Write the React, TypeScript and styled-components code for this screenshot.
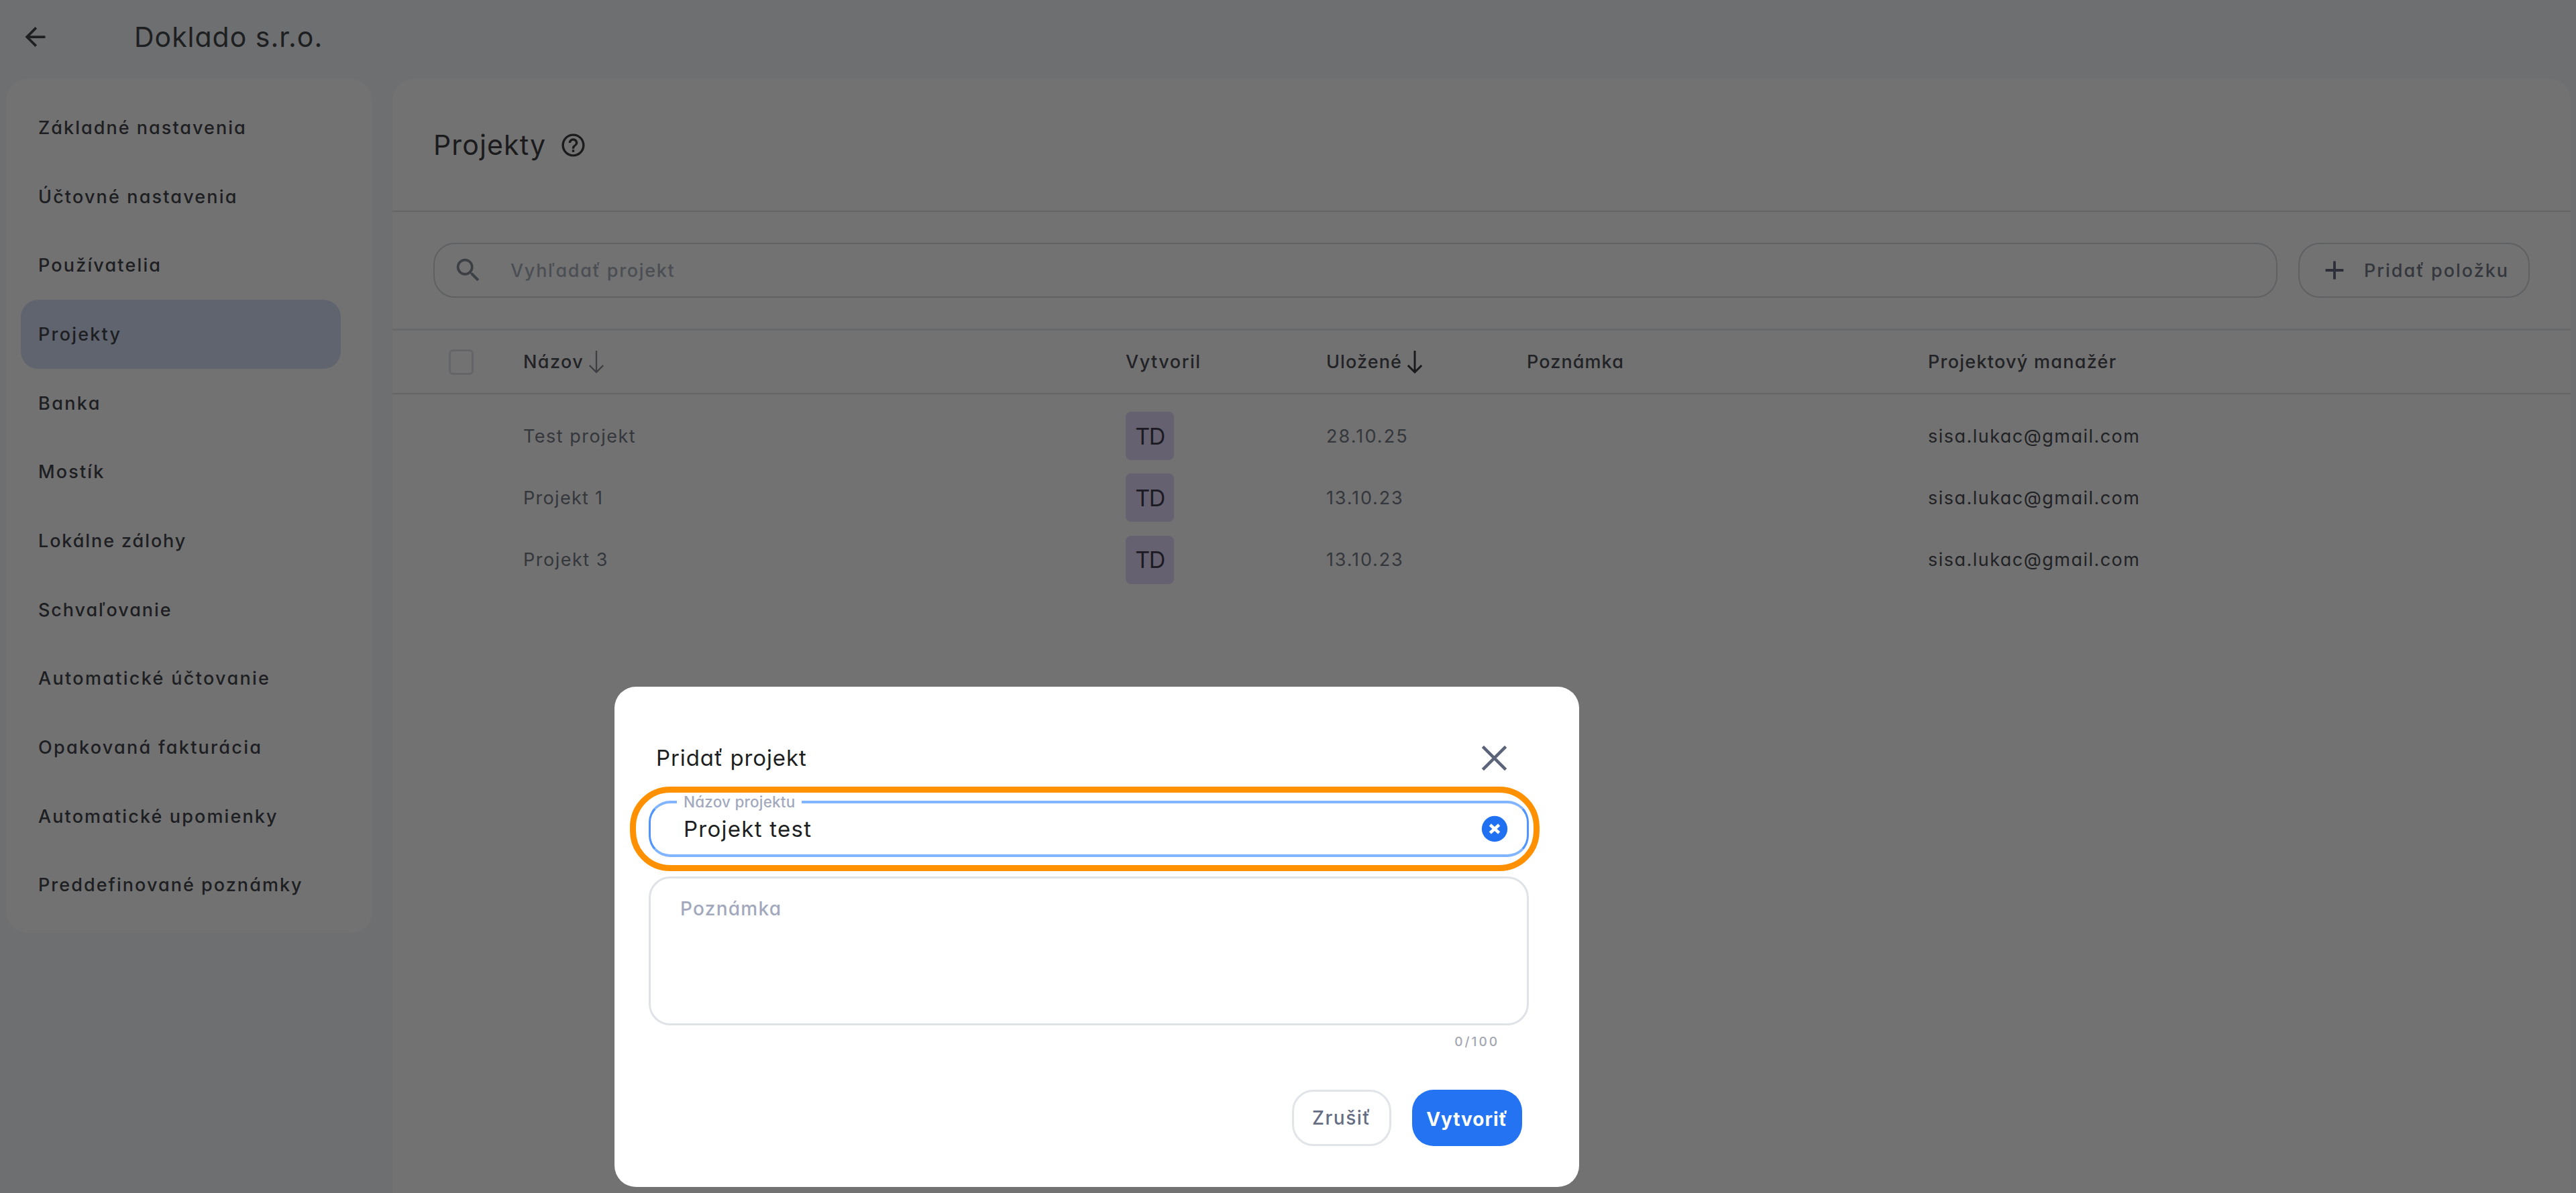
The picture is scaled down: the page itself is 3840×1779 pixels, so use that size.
import React from "react";
import styled, { createGlobalStyle } from "styled-components";

const GlobalStyle = createGlobalStyle`
  *, *::before, *::after { box-sizing: border-box; }
  body {
    margin: 0;
    background: #f6f9fd;
    font-family: Inter, "Liberation Sans", sans-serif;
    font-feature-settings: "cv11";
    overflow: hidden;
  }
`;

const Page = styled.div`
  display: flex;
  flex-direction: column;
  width: 3840px;
  height: 1779px;
`;

const Label = styled.span<{ $ls?: number }>`
  letter-spacing: ${(p) => p.$ls ?? 0}px;
  white-space: nowrap;
`;

const TopBar = styled.header`
  display: flex;
  align-items: center;
  height: 118px;
  padding: 0 0 9px 30px;
  color: #45464b;
  font-size: 41px;
`;

const BackIcon = styled.svg`
  width: 45px;
  height: 46px;
  margin-right: 125px;
`;

const Body = styled.div`
  display: flex;
  align-items: flex-start;
  flex: 1;
  padding: 0 8px 0 9px;
  gap: 30px;
`;

const Sidebar = styled.nav`
  width: 546px;
  height: 1273px;
  padding: 21px 47px 0 22px;
  border-radius: 32px;
  background: #fff;
`;

const NavItem = styled.div<{ $active?: boolean }>`
  display: flex;
  align-items: center;
  height: 102.7px;
  padding: 0 0 0 26px;
  border-radius: 26px;
  background: ${(p) => (p.$active ? "#d4e0f8" : "transparent")};
  color: #45464c;
  font-size: 27px;
  font-weight: 450;
`;

const Panel = styled.main`
  flex: 1;
  align-self: stretch;
  border-radius: 32px 32px 0 0;
  background: #fff;
`;

const PanelHeader = styled.div`
  display: flex;
  align-items: center;
  gap: 20px;
  height: 198px;
  padding-left: 61px;
  border-bottom: 2px solid #dfe2e6;
  color: #3d3e42;
  font-size: 41px;
`;

const HelpIcon = styled.svg`
  width: 41px;
  height: 41px;
`;

const Toolbar = styled.div`
  display: flex;
  align-items: center;
  gap: 31px;
  height: 177px;
  padding: 0 61px;
  border-bottom: 3px solid #e9ebee;
`;

const SearchBox = styled.div`
  display: flex;
  align-items: center;
  flex: 1;
  height: 82px;
  padding-left: 27px;
  gap: 40px;
  border: 2px solid #d2d6dc;
  border-radius: 32px;
  color: #a9b0bc;
  font-size: 27px;
  font-weight: 500;
`;

const SearchIcon = styled.svg`
  width: 46px;
  height: 46px;
  color: #878d98;
`;

const AddButton = styled.div`
  display: flex;
  align-items: center;
  width: 345px;
  height: 82px;
  padding-left: 29px;
  gap: 21px;
  border: 2px solid #d2d6dc;
  border-radius: 32px;
  color: #757b88;
  font-size: 27px;
  font-weight: 500;
`;

const PlusIcon = styled.svg`
  width: 46px;
  height: 46px;
  color: #656c80;
`;

const Row = styled.div<{ $head?: boolean }>`
  display: grid;
  grid-template-columns: 195px 898px 299px 299px 598px 1fr;
  align-items: center;
  height: ${(p) => (p.$head ? 95 : 92.3)}px;
  border-bottom: ${(p) => (p.$head ? "2px solid #dfe2e6" : "none")};
  font-size: 27px;
  font-weight: ${(p) => (p.$head ? 450 : 400)};
`;

const Rows = styled.div`
  padding-top: 16px;
`;

const Cell = styled.div<{ $tone?: "head" | "muted" | "text" }>`
  display: flex;
  align-items: center;
  gap: 7px;
  color: ${(p) => (p.$tone === "head" ? "#4d4e55" : p.$tone === "muted" ? "#757b87" : "#4b4d54")};
`;

const Checkbox = styled.span`
  width: 37px;
  height: 38px;
  margin-left: 84px;
  border: 3px solid #dfe2e8;
  border-radius: 6px;
`;

const SortIcon = styled.svg<{ $active?: boolean }>`
  width: 24px;
  height: 35px;
  color: ${(p) => (p.$active ? "#3a3b40" : "#8a8d94")};
`;

const Avatar = styled.span`
  display: flex;
  align-items: center;
  justify-content: center;
  width: 72px;
  height: 72px;
  border-radius: 8px;
  background: #e1d8fa;
  color: #3f3e4e;
  font-size: 34px;
  letter-spacing: -1.6px;
`;

const Overlay = styled.div`
  position: absolute;
  inset: 0;
  padding: 1024px 0 0 916px;
  background: rgba(0, 0, 0, 0.553);
`;

const Dialog = styled.section`
  display: flex;
  flex-direction: column;
  width: 1438px;
  height: 746px;
  padding: 65px 75px 61px 51px;
  border-radius: 32px;
  background: #fff;
`;

const DialogHead = styled.div`
  display: flex;
  align-items: center;
  justify-content: space-between;
  height: 82px;
  padding: 0 23px 0 11px;
  color: #1e1f22;
  font-size: 33px;
`;

const CloseIcon = styled.svg`
  width: 57px;
  height: 57px;
  color: #5a6378;
`;

const Field = styled.div`
  position: relative;
  display: flex;
  align-items: center;
  justify-content: space-between;
  height: 84px;
  margin-top: 23px;
  padding: 0 25px 1px 49px;
  border: 3px solid #4f94ff;
  border-top: 4px solid #82b5ff;
  border-bottom: 4px solid #82b5ff;
  border-radius: 32px;
  color: #1e1f22;
  font-size: 33px;
`;

const FieldLabel = styled.span`
  position: absolute;
  top: -17px;
  left: 39px;
  width: 186px;
  padding-left: 10px;
  background: #fff;
  color: #a3a9bd;
  font-size: 22.5px;
  font-weight: 500;
  line-height: 30px;
`;

const Highlight = styled.span`
  position: absolute;
  inset: -25px -19px -25px -31px;
  border: 9px solid #ff9100;
  border-radius: 60px;
`;

const ClearIcon = styled.svg`
  width: 46px;
  height: 46px;
`;

const TextArea = styled.div`
  height: 222px;
  margin-top: 29px;
  padding: 25px 44px;
  border: 3px solid #dfe2e6;
  border-radius: 32px;
  color: #a3a9bd;
  font-size: 28px;
  font-weight: 500;
  line-height: 40px;
`;

const Counter = styled.div`
  display: flex;
  justify-content: flex-end;
  margin-top: 10px;
  padding-right: 44px;
  color: #a3a5b0;
  font-size: 19px;
  font-weight: 500;
  line-height: 30px;
`;

const Actions = styled.div`
  display: flex;
  justify-content: flex-end;
  gap: 31px;
  margin-top: auto;
  padding-right: 10px;
`;

const Button = styled.div<{ $primary?: boolean }>`
  display: flex;
  align-items: center;
  justify-content: center;
  width: ${(p) => (p.$primary ? 164 : 148)}px;
  height: 84px;
  padding-top: ${(p) => (p.$primary ? 3 : 0)}px;
  border: ${(p) => (p.$primary ? "none" : "3px solid #e1e4e8")};
  border-radius: 32px;
  background: ${(p) => (p.$primary ? "#2373f3" : "#fff")};
  color: ${(p) => (p.$primary ? "#fff" : "#666c82")};
  font-size: 28px;
  font-weight: ${(p) => (p.$primary ? 700 : 500)};
`;

const nav = [
  { text: "Základné nastavenia", ls: 2.03 },
  { text: "Účtovné nastavenia", ls: 2.15 },
  { text: "Používatelia", ls: 2.15 },
  { text: "Projekty", ls: 2.2, active: true },
  { text: "Banka", ls: 2.4 },
  { text: "Mostík", ls: 2.15 },
  { text: "Lokálne zálohy", ls: 1.9 },
  { text: "Schvaľovanie", ls: 1.9 },
  { text: "Automatické účtovanie", ls: 2.32 },
  { text: "Opakovaná fakturácia", ls: 2.28 },
  { text: "Automatické upomienky", ls: 2.12 },
  { text: "Preddefinované poznámky", ls: 2.04 },
];

const projects = [
  { name: "Test projekt", date: "28.10.25", ls: 1.5, dateLs: 2.1 },
  { name: "Projekt 1", date: "13.10.23", ls: 1.3, dateLs: 1.85 },
  { name: "Projekt 3", date: "13.10.23", ls: 1.5, dateLs: 1.85 },
];

const Sort = ({ active }: { active?: boolean }) => (
  <SortIcon $active={active} viewBox="0 0 24 36" fill="none" stroke="currentColor" strokeWidth={active ? 3 : 2.4}>
    <path d="M12 1V34M1.5 23.5L12 34L22.5 23.5" />
  </SortIcon>
);

export default function App() {
  return (
    <>
      <GlobalStyle />
      <Page>
        <TopBar>
          <BackIcon viewBox="0 0 24 24" fill="currentColor">
            <path d="M20 11H7.83l5.59-5.59L12 4l-8 8 8 8 1.41-1.41L7.83 13H20v-2z" />
          </BackIcon>
          <Label $ls={0.98}>Doklado s.r.o.</Label>
        </TopBar>
        <Body>
          <Sidebar>
            {nav.map((n) => (
              <NavItem key={n.text} $active={n.active}>
                <Label $ls={n.ls}>{n.text}</Label>
              </NavItem>
            ))}
          </Sidebar>
          <Panel>
            <PanelHeader>
              <Label $ls={1.13}>Projekty</Label>
              <HelpIcon viewBox="0 0 24 24" fill="currentColor">
                <path d="M11 18h2v-2h-2v2zm1-16C6.48 2 2 6.48 2 12s4.48 10 10 10 10-4.48 10-10S17.52 2 12 2zm0 18c-4.41 0-8-3.59-8-8s3.59-8 8-8 8 3.59 8 8-3.59 8-8 8zm0-14c-2.21 0-4 1.79-4 4h2c0-1.1.9-2 2-2s2 .9 2 2c0 2-3 1.75-3 5h2c0-2.25 3-2.5 3-5 0-2.21-1.79-4-4-4z" />
              </HelpIcon>
            </PanelHeader>
            <Toolbar>
              <SearchBox>
                <SearchIcon viewBox="0 0 24 24" fill="currentColor">
                  <path d="M15.5 14h-.79l-.28-.27C15.41 12.59 16 11.11 16 9.5 16 5.91 13.09 3 9.5 3S3 5.91 3 9.5 5.91 16 9.5 16c1.61 0 3.09-.59 4.23-1.57l.27.28v.79l5 4.99L20.49 19l-4.99-5zm-6 0C7.01 14 5 11.99 5 9.5S7.01 5 9.5 5 14 7.01 14 9.5 11.99 14 9.5 14z" />
                </SearchIcon>
                <Label $ls={1.68}>Vyhľadať projekt</Label>
              </SearchBox>
              <AddButton>
                <PlusIcon viewBox="0 0 24 24" fill="currentColor">
                  <path d="M19 13h-6v6h-2v-6H5v-2h6V5h2v6h6v2z" />
                </PlusIcon>
                <Label $ls={1.98}>Pridať položku</Label>
              </AddButton>
            </Toolbar>
            <Row $head>
              <Checkbox />
              <Cell $tone="head"><Label $ls={1.4}>Názov</Label><Sort /></Cell>
              <Cell $tone="head"><Label $ls={1.5}>Vytvoril</Label></Cell>
              <Cell $tone="head"><Label $ls={1.1}>Uložené</Label><Sort active /></Cell>
              <Cell $tone="head"><Label $ls={1.1}>Poznámka</Label></Cell>
              <Cell $tone="head"><Label $ls={1.25}>Projektový manažér</Label></Cell>
            </Row>
            <Rows>
              {projects.map((p) => (
                <Row key={p.name}>
                  <Cell />
                  <Cell $tone="muted"><Label $ls={p.ls}>{p.name}</Label></Cell>
                  <Cell><Avatar>TD</Avatar></Cell>
                  <Cell $tone="muted"><Label $ls={p.dateLs}>{p.date}</Label></Cell>
                  <Cell />
                  <Cell $tone="text"><Label $ls={1.47}>sisa.lukac@gmail.com</Label></Cell>
                </Row>
              ))}
            </Rows>
          </Panel>
        </Body>
      </Page>
      <Overlay>
        <Dialog>
          <DialogHead>
            <Label $ls={0.9}>Pridať projekt</Label>
            <CloseIcon viewBox="0 0 24 24" fill="none" stroke="currentColor" strokeWidth="1.9">
              <path d="M4.8 4.8L19.2 19.2M19.2 4.8L4.8 19.2" />
            </CloseIcon>
          </DialogHead>
          <Field>
            <FieldLabel><Label $ls={0.2}>Názov projektu</Label></FieldLabel>
            <Label $ls={1.27}>Projekt test</Label>
            <ClearIcon viewBox="0 0 24 24">
              <circle cx="12" cy="12" r="10" fill="#2071f2" />
              <path d="M8.5 8.9L15.5 15.1M15.5 8.9L8.5 15.1" stroke="#fff" strokeWidth="2.4" />
            </ClearIcon>
            <Highlight />
          </Field>
          <TextArea><Label $ls={1.25}>Poznámka</Label></TextArea>
          <Counter><Label $ls={3}>0/100</Label></Counter>
          <Actions>
            <Button><Label $ls={1.5}>Zrušiť</Label></Button>
            <Button $primary><Label $ls={0.93}>Vytvoriť</Label></Button>
          </Actions>
        </Dialog>
      </Overlay>
    </>
  );
}
